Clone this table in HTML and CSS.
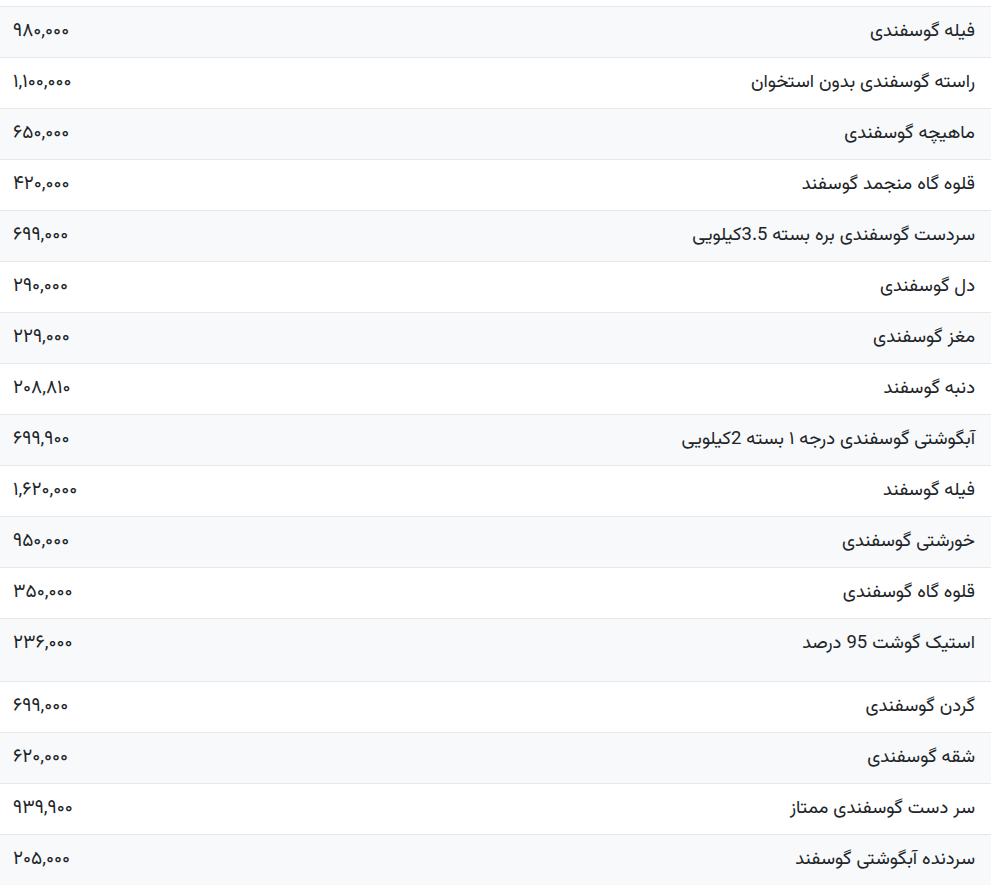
FILE: index.html
```html
<!DOCTYPE html>
<html lang="fa" dir="rtl">
<head>
<meta charset="utf-8">
<title>قیمت گوشت گوسفندی</title>
<link rel="stylesheet" href="styles.css">
</head>
<body>
<div class="wrap">
<table class="prices">
<tbody>
<tr><td class="name">فيله گوسفندی</td><td class="price">۹۸۰,۰۰۰</td></tr>
<tr><td class="name">راسته گوسفندی بدون استخوان</td><td class="price">۱,۱۰۰,۰۰۰</td></tr>
<tr><td class="name">ماهیچه گوسفندی</td><td class="price">۶۵۰,۰۰۰</td></tr>
<tr><td class="name">قلوه گاه منجمد گوسفند</td><td class="price">۴۲۰,۰۰۰</td></tr>
<tr><td class="name">سردست گوسفندی بره بسته 3.5کیلویی</td><td class="price">۶۹۹,۰۰۰</td></tr>
<tr><td class="name">دل گوسفندی</td><td class="price">۲۹۰,۰۰۰</td></tr>
<tr><td class="name">مغز گوسفندی</td><td class="price">۲۲۹,۰۰۰</td></tr>
<tr><td class="name">دنبه گوسفند</td><td class="price">۲۰۸,۸۱۰</td></tr>
<tr><td class="name">آبگوشتی گوسفندی درجه ۱ بسته 2کیلویی</td><td class="price">۶۹۹,۹۰۰</td></tr>
<tr><td class="name">فيله گوسفند</td><td class="price">۱,۶۲۰,۰۰۰</td></tr>
<tr><td class="name">خورشتی گوسفندی</td><td class="price">۹۵۰,۰۰۰</td></tr>
<tr><td class="name">قلوه گاه گوسفندی</td><td class="price">۳۵۰,۰۰۰</td></tr>
<tr class="tall"><td class="name">استیک گوشت 95 درصد</td><td class="price">۲۳۶,۰۰۰</td></tr>
<tr><td class="name">گردن گوسفندی</td><td class="price">۶۹۹,۰۰۰</td></tr>
<tr><td class="name">شقه گوسفندی</td><td class="price">۶۲۰,۰۰۰</td></tr>
<tr><td class="name">سر دست گوسفندی ممتاز</td><td class="price">۹۳۹,۹۰۰</td></tr>
<tr><td class="name">سردنده آبگوشتی گوسفند</td><td class="price">۲۰۵,۰۰۰</td></tr>
</tbody>
</table>
</div>
</body>
</html>
```

FILE: styles.css
```css
html, body {
  margin: 0;
  padding: 0;
  background: #ffffff;
}
body {
  font-family: "Vazirmatn", "Noto Sans Arabic", "DejaVu Sans", sans-serif;
  font-size: 18.5px;
  color: #212529;
}
.wrap {
  padding-top: 6px;
}
.prices {
  width: 100%;
  border-collapse: collapse;
}
.prices td {
  border-top: 1px solid #e6e8eb;
  padding: 12px 16px 12px 12px;
  line-height: 26px;
  height: 26px;
  vertical-align: top;
  text-align: right;
}
.prices td.price {
  text-align: left;
  width: 50%;
  padding-left: 13px;
  font-size: 19px;
  letter-spacing: 0.6px;
}
.prices tr:nth-child(odd) td {
  background: #f8f9fa;
}
.prices tr.tall td {
  padding-bottom: 24px;
}
```
